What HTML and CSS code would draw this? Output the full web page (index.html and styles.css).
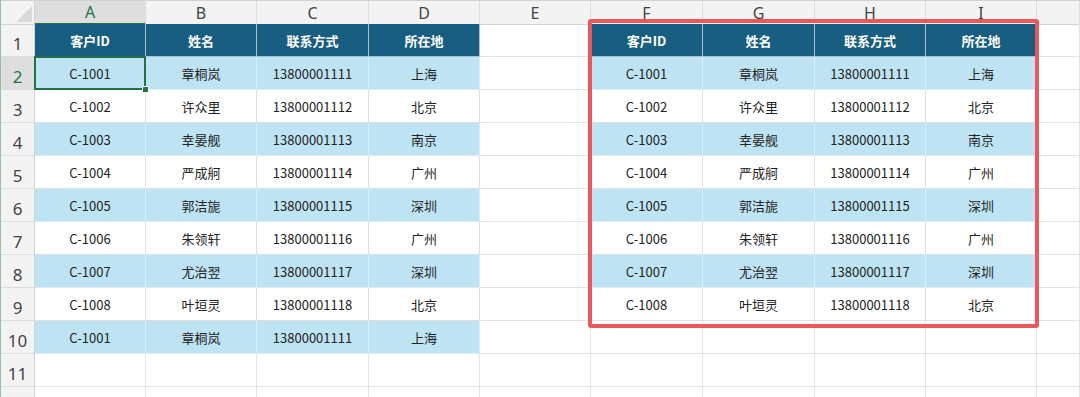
FILE: index.html
```html
<!DOCTYPE html>
<html lang="zh-CN">
<head>
<meta charset="utf-8">
<title>Sheet</title>
<link rel="stylesheet" href="styles.css">
</head>
<body>
<div class="sheet">
  <div class="row hdr">
    <div class="corner"><span class="tri"></span></div>
    <div class="ch sel-ch">A</div><div class="ch">B</div><div class="ch">C</div><div class="ch">D</div><div class="ch">E</div><div class="ch">F</div><div class="ch">G</div><div class="ch">H</div><div class="ch">I</div><div class="ch"></div>
  </div>
  <div class="row">
    <div class="rh">1</div>
    <div class="c th">客户ID</div><div class="c th">姓名</div><div class="c th">联系方式</div><div class="c th">所在地</div><div class="c"></div>
    <div class="c th">客户ID</div><div class="c th">姓名</div><div class="c th">联系方式</div><div class="c th">所在地</div><div class="c"></div>
  </div>
  <div class="row">
    <div class="rh sel-rh">2</div>
    <div class="c b sel">C-1001</div><div class="c b">章桐岚</div><div class="c b">13800001111</div><div class="c b">上海</div><div class="c"></div>
    <div class="c b">C-1001</div><div class="c b">章桐岚</div><div class="c b">13800001111</div><div class="c b">上海</div><div class="c"></div>
  </div>
  <div class="row">
    <div class="rh">3</div>
    <div class="c w">C-1002</div><div class="c w">许众里</div><div class="c w">13800001112</div><div class="c w">北京</div><div class="c"></div>
    <div class="c w">C-1002</div><div class="c w">许众里</div><div class="c w">13800001112</div><div class="c w">北京</div><div class="c"></div>
  </div>
  <div class="row">
    <div class="rh">4</div>
    <div class="c b">C-1003</div><div class="c b">幸晏舰</div><div class="c b">13800001113</div><div class="c b">南京</div><div class="c"></div>
    <div class="c b">C-1003</div><div class="c b">幸晏舰</div><div class="c b">13800001113</div><div class="c b">南京</div><div class="c"></div>
  </div>
  <div class="row">
    <div class="rh">5</div>
    <div class="c w">C-1004</div><div class="c w">严成舸</div><div class="c w">13800001114</div><div class="c w">广州</div><div class="c"></div>
    <div class="c w">C-1004</div><div class="c w">严成舸</div><div class="c w">13800001114</div><div class="c w">广州</div><div class="c"></div>
  </div>
  <div class="row">
    <div class="rh">6</div>
    <div class="c b">C-1005</div><div class="c b">郭洁旎</div><div class="c b">13800001115</div><div class="c b">深圳</div><div class="c"></div>
    <div class="c b">C-1005</div><div class="c b">郭洁旎</div><div class="c b">13800001115</div><div class="c b">深圳</div><div class="c"></div>
  </div>
  <div class="row">
    <div class="rh">7</div>
    <div class="c w">C-1006</div><div class="c w">朱领轩</div><div class="c w">13800001116</div><div class="c w">广州</div><div class="c"></div>
    <div class="c w">C-1006</div><div class="c w">朱领轩</div><div class="c w">13800001116</div><div class="c w">广州</div><div class="c"></div>
  </div>
  <div class="row">
    <div class="rh">8</div>
    <div class="c b">C-1007</div><div class="c b">尤治翌</div><div class="c b">13800001117</div><div class="c b">深圳</div><div class="c"></div>
    <div class="c b">C-1007</div><div class="c b">尤治翌</div><div class="c b">13800001117</div><div class="c b">深圳</div><div class="c"></div>
  </div>
  <div class="row">
    <div class="rh">9</div>
    <div class="c w">C-1008</div><div class="c w">叶垣灵</div><div class="c w">13800001118</div><div class="c w">北京</div><div class="c"></div>
    <div class="c w">C-1008</div><div class="c w">叶垣灵</div><div class="c w">13800001118</div><div class="c w">北京</div><div class="c"></div>
  </div>
  <div class="row">
    <div class="rh">10</div>
    <div class="c b">C-1001</div><div class="c b">章桐岚</div><div class="c b">13800001111</div><div class="c b">上海</div><div class="c"></div>
    <div class="c"></div><div class="c"></div><div class="c"></div><div class="c"></div><div class="c"></div>
  </div>
  <div class="row">
    <div class="rh">11</div>
    <div class="c"></div><div class="c"></div><div class="c"></div><div class="c"></div><div class="c"></div>
    <div class="c"></div><div class="c"></div><div class="c"></div><div class="c"></div><div class="c"></div>
  </div>
  <div class="row">
    <div class="rh"></div>
    <div class="c"></div><div class="c"></div><div class="c"></div><div class="c"></div><div class="c"></div>
    <div class="c"></div><div class="c"></div><div class="c"></div><div class="c"></div><div class="c"></div>
  </div>
  <div class="highlight"></div>
</div>
</body>
</html>
```

FILE: styles.css
```css
html, body {
  margin: 0;
  padding: 0;
  background: #ffffff;
  overflow: hidden;
}

body {
  width: 1080px;
  height: 397px;
  font-family: "Noto Sans CJK SC", "Noto Sans", sans-serif;
}

.sheet {
  position: relative;
  width: 1080px;
  height: 397px;
  box-sizing: border-box;
  border-left: 1px solid #9cbda6;
  overflow: hidden;
}

.row {
  display: grid;
  grid-template-columns: 34px 111px 111px 112px 111px 111px 112px 112px 111px 111px 1fr;
  height: 33px;
}

.hdr {
  height: 24px;
  box-sizing: border-box;
  border-top: 1px solid #d2d2d2;
}

.corner {
  position: relative;
  background: #f3f3f3;
  border-right: 1px solid #d4d4d4;
  border-bottom: 1px solid #d4d4d4;
}

.tri {
  position: absolute;
  right: 2px;
  bottom: 2px;
  width: 16px;
  height: 16px;
  background: #d9d9d9;
  clip-path: polygon(100% 0, 100% 100%, 0 100%);
}

.ch {
  display: flex;
  align-items: center;
  justify-content: center;
  background: #f3f3f3;
  color: #444444;
  font-size: 16px;
  font-family: "Noto Sans", "Noto Sans CJK SC", sans-serif;
  border-right: 1px solid #dcdcdc;
  border-bottom: 1px solid #d4d4d4;
  box-sizing: border-box;
}

.sel-ch {
  background: #dedede;
  color: #1e7145;
  border-bottom: 2px solid #217346;
}

.rh {
  display: flex;
  align-items: flex-end;
  justify-content: center;
  padding-bottom: 1px;
  box-sizing: border-box;
  background: #f3f3f3;
  color: #444444;
  font-size: 17px;
  font-family: "Noto Sans", "Noto Sans CJK SC", sans-serif;
  border-right: 1px solid #d4d4d4;
  border-bottom: 1px solid #dcdcdc;
}

.sel-rh {
  background: #dedede;
  color: #1e7145;
}

.c {
  display: flex;
  align-items: center;
  justify-content: center;
  box-sizing: border-box;
  border-right: 1px solid #e3e3e3;
  border-bottom: 1px solid #e3e3e3;
  font-size: 13px;
  color: #222222;
  white-space: nowrap;
}

.th {
  background: #175e80;
  color: #ffffff;
  font-weight: bold;
  border-right-color: #a3c2d2;
  border-bottom-color: #a3c2d2;
}

.b {
  background: #bee4f3;
  border-right-color: #ddeef6;
  border-bottom-color: #ddeef6;
}

.w {
  border-right-color: #dedede;
  border-bottom-color: #e0e0e0;
}

.sel {
  position: relative;
}

.sel::after {
  content: "";
  position: absolute;
  left: -1px;
  top: -1px;
  right: -1px;
  bottom: -1px;
  border: 2px solid #217346;
}

.sel::before {
  content: "";
  position: absolute;
  right: -4px;
  bottom: -4px;
  width: 5px;
  height: 5px;
  background: #217346;
  border: 1px solid #ffffff;
  z-index: 2;
}

.highlight {
  position: absolute;
  left: 587px;
  top: 19px;
  width: 451px;
  height: 309px;
  box-sizing: border-box;
  border: 4px solid #e9585b;
  border-radius: 3px;
  pointer-events: none;
}
```
